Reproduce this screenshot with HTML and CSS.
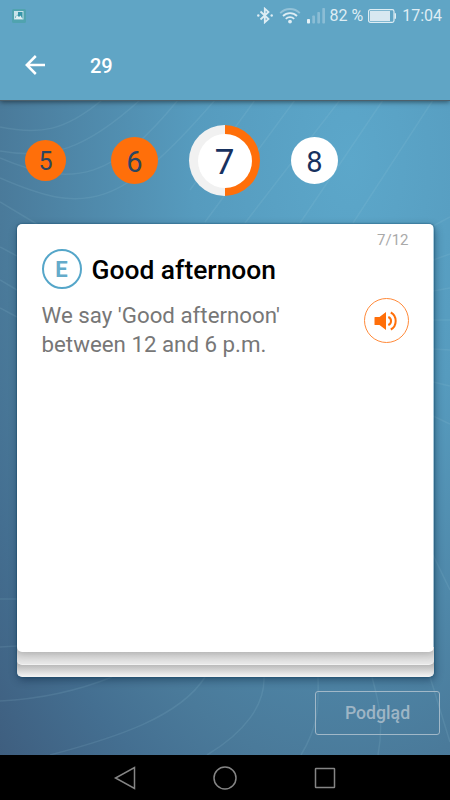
FILE: index.html
```html
<!DOCTYPE html>
<html lang="pl">
<head>
  <meta charset="UTF-8" />
  <meta name="viewport" content="width=device-width, initial-scale=1.0"/>
  <title>29</title>
  <link rel="stylesheet" href="styles.css">
</head>
<body>
  <div class="screen">
    <header class="top">
      <div class="status-bar">
        <svg class="picture-icon" width="14" height="14" viewBox="0 0 14 14">
          <rect width="14" height="14" rx="1.500" fill="#50a3af"/>
          <rect x="2.500" y="2.500" width="8.500" height="7.500" fill="#3795a8" stroke="#c9e3ea"/>
          <path d="M3 9.500L5 6l2 2 1.500-1.500L10.500 10H3z" fill="#e2f0f3"/>
          <path d="M3 3h3v2.500L3 8z" fill="#c9e3ea"/>
        </svg>
        <svg class="bluetooth-icon" width="16" height="17" viewBox="0 0 16 17">
          <path d="M3.500 4.500l8 7.500-3.700 3.300V1.700l3.700 3.300-8 7.500" fill="none" stroke="#deedf4" stroke-width="1.800"/>
          <circle cx="1.300" cy="8.500" r="1.200" fill="#deedf4"/>
          <circle cx="14.700" cy="8.500" r="1.200" fill="#deedf4"/>
        </svg>
        <svg class="wifi-icon" width="22" height="17" viewBox="0 0 22 17" fill="none" stroke-width="1.800">
          <path d="M1.200 6.200a13.500 13.500 0 0 1 19.600 0" stroke="#93c2d8"/>
          <path d="M4 9a9.800 9.800 0 0 1 14 0" stroke="#deedf4"/>
          <path d="M6.800 11.800a6 6 0 0 1 8.400 0" stroke="#deedf4"/>
          <circle cx="11" cy="14.600" r="1.900" fill="#deedf4"/>
        </svg>
        <svg class="signal-icon" width="18" height="16" viewBox="0 0 18 16" fill="#8bbdd5">
          <rect x="0" y="11" width="3" height="4.500" rx=".8" fill="#e6f2f7"/>
          <rect x="5.300" y="7.500" width="2.700" height="8" rx=".8"/>
          <rect x="10.300" y="4" width="2.700" height="11.500" rx=".8"/>
          <rect x="15.300" y="0" width="2.700" height="15.500" rx=".8"/>
        </svg>
        <span class="percent">82 %</span>
        <svg class="battery-icon" width="28" height="14" viewBox="0 0 28 14">
          <rect x=".6" y=".6" width="25.400" height="12.800" rx="1.800" fill="none" stroke="#deedf4" stroke-width="1.200"/>
          <rect x="2" y="2" width="20" height="10" fill="#d8e8f1"/>
          <path d="M26.500 4.200H28v5.600h-1.500z" fill="#deedf4"/>
        </svg>
        <span class="clock">17:04</span>
      </div>
      <div class="app-bar">
        <svg class="back" width="20" height="20" viewBox="0 0 20 20" fill="none" stroke="#fff" stroke-width="2.500">
          <path d="M20 10H2M10.800 1L1.800 10l9 9"/>
        </svg>
        <h1>29</h1>
      </div>
    </header>

    <main class="lesson">
      <svg class="waves" width="450" height="655" viewBox="0 100 450 655">
        <path d="M0 127C40 135 65 131 102 100M0 151C50 160 85 150 140 100M0 158C75 190 115 177 178 100M0 178C85 215 120 210 215 100M0 202L50 232"/>
        <path d="M255 100L190 190M295 100L205 222M340 100L245 223M383 100L300 223M433 100L353 223"/>
        <path d="M450 217L433 226M450 254L433 260M450 288L433 291M433 320H450M433 349L450 350M433 382L450 386M433 416L450 424M433 555L450 590"/>
        <path d="M0 247L17 256M0 280L17 290M0 308L17 317M0 599H17M0 647L17 646"/>
        <path d="M0 701Q60 698 112 677M50 755C115 738 180 717 205 677M207 755C245 732 265 705 264 677M301 755C317 728 319 712 318 677M378 755C384 722 379 703 372 677M430 677L450 742"/>
      </svg>

      <nav class="steps">
        <span class="step small done">5</span>
        <span class="step done">6</span>
        <span class="step current"><b>7</b></span>
        <span class="step">8</span>
      </nav>

      <div class="stack">
        <article class="card">
          <div class="counter">7/12</div>
          <div class="heading">
            <span class="badge">E</span>
            <h2>Good afternoon</h2>
          </div>
          <div class="content">
            <p>We say 'Good afternoon'<br>between 12 and 6 p.m.</p>
            <button class="sound">
              <svg width="24" height="20" viewBox="0 0 24 20">
                <path d="M1 6h4.500L12 1v18l-6.500-5H1q-.5 0-.5-.5v-7Q.5 6 1 6z" fill="#ff6f0a"/>
                <path d="M14.300 6a4.300 4.300 0 0 1 0 8M16.800 1.500c6.500 3.500 6.500 13.500 0 17" fill="none" stroke="#ff6f0a" stroke-width="2"/>
              </svg>
            </button>
          </div>
        </article>
        <div class="sheet"></div>
        <div class="sheet last"></div>
      </div>

      <button class="preview">Podgląd</button>
    </main>

    <footer class="nav-bar">
      <svg width="24" height="24" viewBox="0 0 24 24"><path d="M21.500 1.500v21L2.500 12z"/></svg>
      <svg width="24" height="24" viewBox="0 0 24 24"><circle cx="12" cy="12" r="11"/></svg>
      <svg width="24" height="24" viewBox="0 0 24 24"><rect x="2.500" y="2.500" width="19" height="19" rx=".5"/></svg>
    </footer>
  </div>
</body>
</html>
```
FILE: styles.css
```css
* {
  box-sizing: border-box;
}

body {
  margin: 0;
  font-family: Roboto, sans-serif;
  background: #000;
}

h1, h2, p {
  margin: 0;
  font-weight: normal;
}

button {
  padding: 0;
  background: none;
  font-family: inherit;
}

.screen {
  width: 450px;
  height: 800px;
  display: flex;
  flex-direction: column;
  overflow: hidden;
}

.top {
  height: 101px;
  background: #60a5c5;
  border-bottom: 1px solid #4d606b;
  box-shadow: 0 1px 5px rgba(0, 0, 0, 0.5);
  position: relative;
  z-index: 2;
}

.status-bar {
  height: 31px;
  padding: 0 8px 0 12px;
  display: flex;
  align-items: center;
  color: #deedf4;
  font-size: 16px;
}

.picture-icon {
  margin-right: auto;
}

.wifi-icon {
  margin: 0 6px 0 6px;
}

.percent {
  margin: 0 5px 0 4px;
}

.clock {
  margin-left: 6px;
}

.app-bar {
  height: 68px;
  padding-left: 25px;
  display: flex;
  align-items: center;
}

.app-bar h1 {
  margin-left: 45px;
  padding-top: 1px;
  color: #fff;
  font-size: 20px;
  font-weight: 500;
}

.lesson {
  height: 654px;
  position: relative;
  background: radial-gradient(450px 780px at 350px 60px, #5ca7ca 0%, #569bbe 35%, #4a7a9a 78%, #446f91 90%, #3b5474 120%);
}

/* background lines lie under the whole lesson */
.waves {
  position: absolute;
  top: -1px;
  left: 0;
  fill: none;
  stroke: rgba(160, 205, 225, 0.13);
  stroke-width: 1.5;
}

.steps {
  position: relative;
  height: 119px;
  padding-left: 25px;
  display: flex;
  align-items: center;
}

.step {
  width: 47px;
  height: 47px;
  padding-top: 2px;
  border-radius: 50%;
  display: flex;
  align-items: center;
  justify-content: center;
  background: #fff;
  color: #17315f;
  font-size: 29px;
}

.step.done {
  margin-right: 31px;
  background: #ff6f0a;
  color: #2c4661;
}

.step.small {
  width: 41px;
  height: 41px;
  margin-right: 45px;
  font-size: 25px;
}

.step.current {
  width: 71px;
  height: 71px;
  padding: 0;
  margin-right: 31px;
  background: linear-gradient(90deg, #f1f1f1 50%, #ff6f0a 50%);
}

.step.current b {
  width: 54px;
  height: 54px;
  border-radius: 50%;
  background: #fff;
  font-size: 35px;
  font-weight: normal;
  line-height: 58px;
  text-align: center;
}

.stack {
  position: relative;
  width: 417px;
  margin: 4px 0 0 16.500px;
  border-radius: 5px;
  box-shadow: 0 0 2px #124b6d, 1px 3px 8px rgba(0, 25, 50, 0.45);
}

.card {
  height: 428px;
  padding: 7px 25px 0;
  background: #fff;
  border-radius: 5px;
  box-shadow: 0 2px 8px rgba(0, 0, 0, 0.15);
  position: relative;
  z-index: 2;
  clip-path: inset(0 0 -12px 0);
}

.counter {
  height: 18px;
  line-height: 19px;
  color: #a9a9a9;
  font-size: 15px;
  text-align: right;
}

.heading {
  height: 40px;
  display: flex;
  align-items: center;
}

.badge {
  width: 40px;
  height: 40px;
  margin-right: 10px;
  border: 2px solid #55a6c9;
  border-radius: 50%;
  color: #64abca;
  font-size: 22px;
  font-weight: bold;
  line-height: 38px;
  text-align: center;
}

.heading h2 {
  padding-top: 2px;
  color: #000;
  font-size: 26.400px;
  font-weight: 500;
}

.content {
  display: flex;
  justify-content: space-between;
}

.content p {
  padding-top: 12px;
  color: #777;
  font-size: 22.300px;
  line-height: 29px;
}

.sound {
  width: 45px;
  height: 45px;
  margin-top: 9px;
  border: 1px solid #ff8a3a;
  border-radius: 50%;
  display: flex;
  align-items: center;
  justify-content: center;
}

.sheet {
  height: 18px;
  margin-top: -5px;
  border-bottom: 1px solid #f2f2f2;
  border-radius: 0 0 5px 5px;
  background: linear-gradient(#d0d0d0 30%, #e8e8e8);
  position: relative;
  z-index: 1;
}

.sheet.last {
  height: 17px;
  z-index: 0;
  background: linear-gradient(#b9b9b9 30%, #f1f1f1);
}

.preview {
  display: block;
  position: relative;
  width: 125px;
  height: 44px;
  margin: 14px 10px 0 auto;
  border: 1px solid #a1b8c8;
  border-radius: 3px;
  color: #9eb5c5;
  font-size: 17.700px;
  font-weight: 500;
}

.nav-bar {
  height: 45px;
  display: flex;
  justify-content: center;
  align-items: center;
  gap: 76px;
  background: #000;
}

.nav-bar svg {
  fill: none;
  stroke: #858585;
  stroke-width: 1.500;
}
```
